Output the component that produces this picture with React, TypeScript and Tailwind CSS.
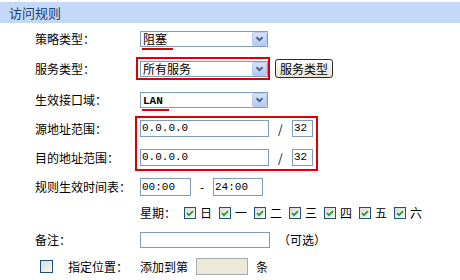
import type { ReactNode } from 'react'

const cjk = "font-['SimSun','Noto_Sans_CJK_SC',sans-serif]"
const mono = "font-['Liberation_Mono','DejaVu_Sans_Mono',monospace]"

function Chevron() {
  return (
    <svg width="9" height="6" viewBox="0 0 9 6">
      <path d="M1.5 1.2 L4.5 4.2 L7.5 1.2" fill="none" stroke="#4d6185" strokeWidth="2" />
    </svg>
  )
}

function Select({ children, mark }: { children: ReactNode; mark?: number }) {
  return (
    <div className="relative flex h-[16px] w-[128px] items-center border border-[#7f9db9] bg-white">
      <div className="flex-1 pl-[2px] leading-none">{children}</div>
      <div className="mr-[0px] flex h-[14px] w-[15px] items-center justify-center rounded-[2px] border border-[#b9c9ef] bg-gradient-to-b from-[#d7e2fb] to-[#b5c9f4]">
        <Chevron />
      </div>
      {mark ? (
        <div className="absolute left-[1px] top-[16px] h-[2px] bg-[#dd0000]" style={{ width: mark }} />
      ) : null}
    </div>
  )
}

function TextBox({ w, value, disabled }: { w: number; value?: string; disabled?: boolean }) {
  return (
    <div
      className={`flex h-[17px] items-center border pl-[1px] leading-none ${mono} text-[11px] ${
        disabled ? 'border-[#a5acb2] bg-[#ece9d8]' : 'border-[#7f9db9] bg-white'
      }`}
      style={{ width: w }}
    >
      {value}
    </div>
  )
}

function Check({ checked }: { checked?: boolean }) {
  return (
    <div className="flex h-[12px] w-[12px] items-center justify-center border border-[#1c5180] bg-gradient-to-br from-[#dcdcd5] to-[#f7f7f4]">
      {checked && (
        <svg width="8" height="7" viewBox="0 0 8 7">
          <path d="M1 3.2 L3 5.2 L7 1.2" fill="none" stroke="#21a121" strokeWidth="1.8" />
        </svg>
      )}
    </div>
  )
}

const days = ['日', '一', '二', '三', '四', '五', '六']

export default function App() {
  return (
    <div className={`h-[280px] w-[460px] overflow-hidden bg-white text-[12px] text-black ${cjk}`}>
      <div className="mt-[2px] flex h-[21px] items-center bg-[#c3d9f9] pl-[9px] text-[13px] text-[#1f3c66]">
        访问规则
      </div>

      {/* 策略类型 */}
      <div className="flex h-[32px] items-center pl-[35px]">
        <div className="w-[105px]">策略类型：</div>
        <Select mark={31}>阻塞</Select>
      </div>

      {/* 服务类型 */}
      <div className="flex h-[27px] items-center pl-[35px]">
        <div className="w-[101px]">服务类型：</div>
        <div className="border-2 border-[#dd0000] pb-[1px] pl-[2px] pt-[2px]">
          <Select>所有服务</Select>
        </div>
        <button className="ml-[5px] flex h-[19px] w-[58px] items-center justify-center rounded-[3px] border border-[#2b2b2b] bg-gradient-to-b from-white to-[#e6e3d6] leading-none">
          服务类型
        </button>
      </div>

      {/* 生效接口域 */}
      <div className="flex h-[34px] items-center pl-[35px] pt-[2px]">
        <div className="w-[105px]">生效接口域：</div>
        <Select mark={27}>
          <span className={`${mono} text-[11px] font-bold`}>LAN</span>
        </Select>
      </div>

      {/* 地址范围 */}
      <div className="flex pl-[35px]">
        <div className="flex w-[100px] flex-col gap-[12px] pt-[4px]">
          <div className="flex h-[17px] items-center">源地址范围：</div>
          <div className="flex h-[17px] items-center">目的地址范围：</div>
        </div>
        <div className="flex flex-col gap-[12px] border-2 border-[#dd0000] pb-[3px] pl-[3px] pr-[3px] pt-[2px]">
          {[0, 1].map((i) => (
            <div key={i} className="flex items-center">
              <TextBox w={129} value="0.0.0.0" />
              <span className="w-[23px] pl-[9px] leading-none">/</span>
              <TextBox w={21} value="32" />
            </div>
          ))}
        </div>
      </div>

      {/* 时间表 */}
      <div className="flex h-[32px] items-center pl-[35px]">
        <div className="w-[105px]">规则生效时间表：</div>
        <div className="flex h-[18px] w-[51px] items-center border border-[#7f9db9] pl-[1px]">
          <span className={`${mono} text-[11px]`}>00:00</span>
        </div>
        <span className="w-[22px] text-center">-</span>
        <div className="flex h-[18px] w-[50px] items-center border border-[#7f9db9] pl-[1px]">
          <span className={`${mono} text-[11px]`}>24:00</span>
        </div>
      </div>

      {/* 星期 */}
      <div className="flex h-[20px] items-center pl-[140px]">
        <span className="mr-[8px]">星期：</span>
        {days.map((d) => (
          <div key={d} className="mr-[7px] flex items-center">
            <Check checked />
            <span className="ml-[4px]">{d}</span>
          </div>
        ))}
      </div>

      {/* 备注 */}
      <div className="flex h-[34px] items-center pl-[35px]">
        <div className="w-[105px]">备注：</div>
        <div className="h-[16px] w-[130px] border border-[#7f9db9]" />
        <span className="ml-[8px]">（可选）</span>
      </div>

      {/* 指定位置 */}
      <div className="flex h-[19px] items-center pl-[40px]">
        <div className="flex h-[13px] w-[13px] border border-[#1c5180] bg-gradient-to-br from-[#dcdcd5] to-[#f7f7f4]" />
        <span className="ml-[15px]">指定位置：</span>
        <span className="ml-[12px]">添加到第</span>
        <div className="ml-[8px]">
          <TextBox w={52} disabled />
        </div>
        <span className="ml-[8px]">条</span>
      </div>
    </div>
  )
}
